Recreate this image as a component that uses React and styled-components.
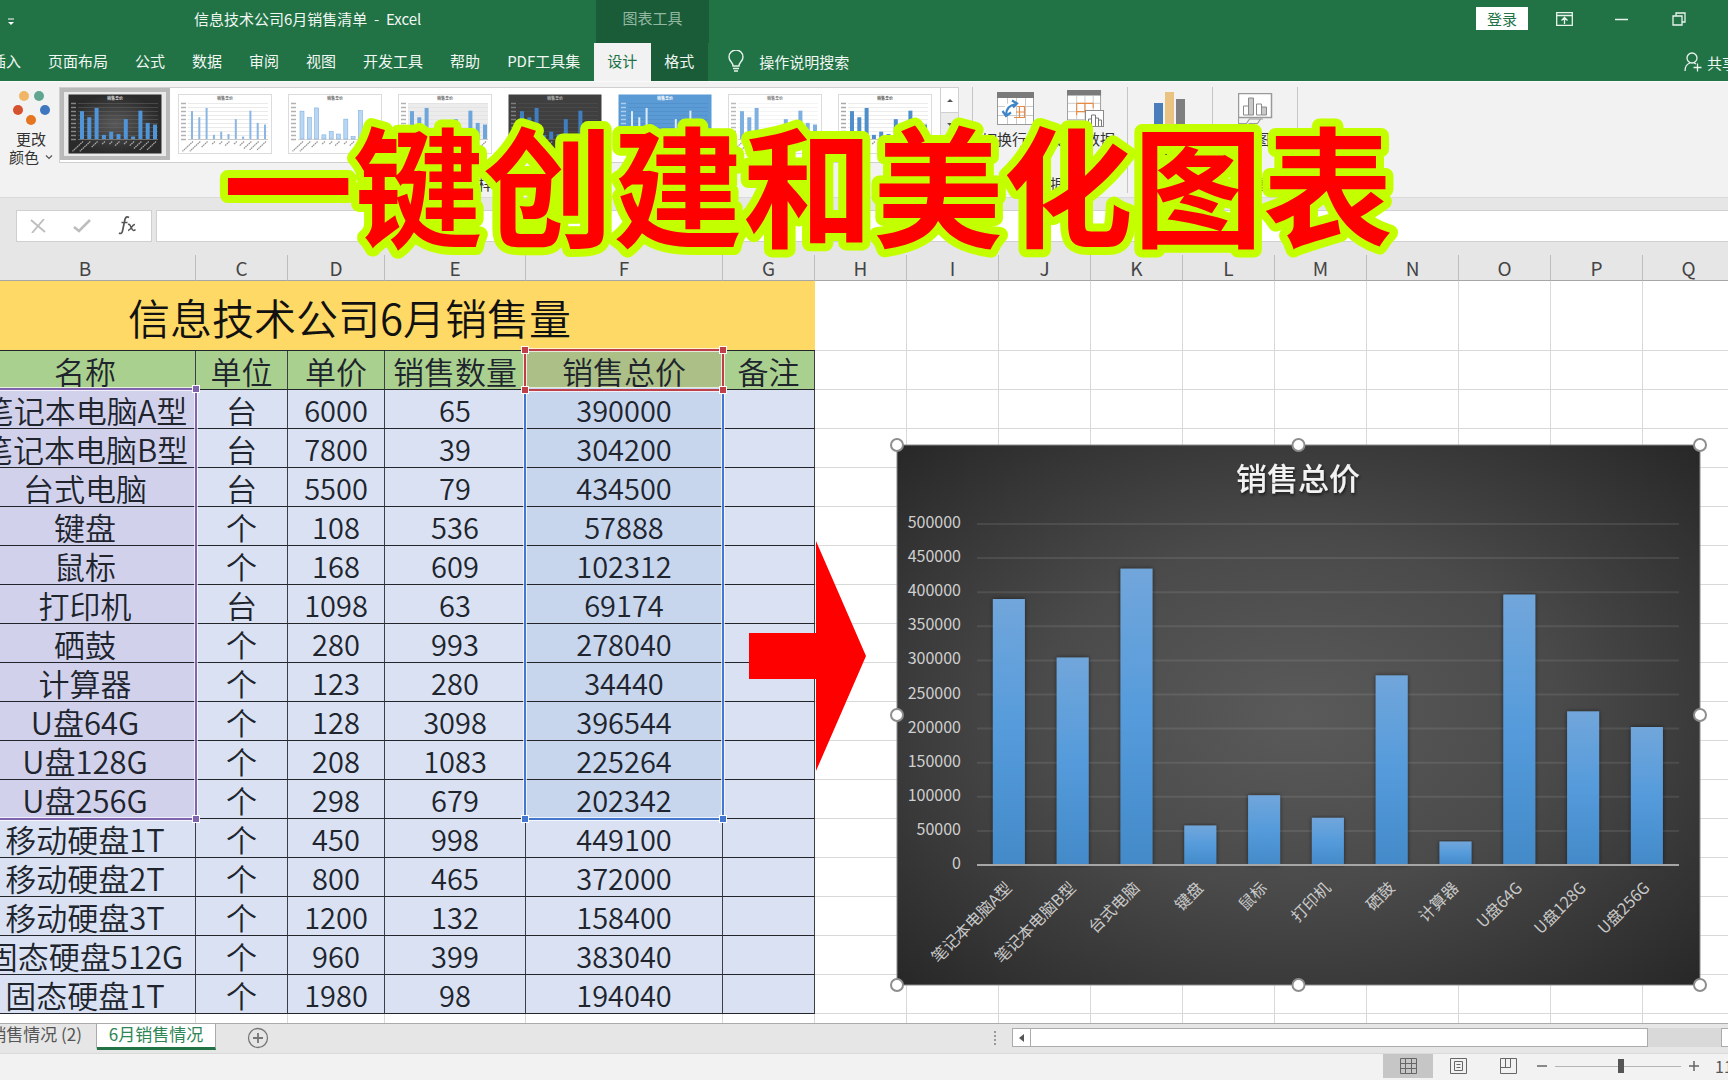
import React from "react";
import styled, { createGlobalStyle } from "styled-components";

const COLORS = {
  green: "#217346",
  greenDark: "#1a5c38",
  ribbon: "#f2f2f2",
  chrome: "#e6e6e6",
  line: "#c6c6c6",
};

const GlobalStyle = createGlobalStyle`
  * { box-sizing: border-box; }
  html, body { margin: 0; overflow: hidden; }
  body { font-family: "Noto Sans CJK SC", "Noto Sans", sans-serif; font-size: 15px; color: #333; }
  button, input { font: inherit; color: inherit; border: 0; padding: 0; margin: 0; background: none; }
`;

const Page = styled.div`
  position: relative;
  display: flex;
  flex-direction: column;
  height: 100vh;
  overflow: hidden;
  background: ${COLORS.chrome};
`;

/* ---------- title bar and tabs ---------- */

const Header = styled.header`
  position: relative;
  flex: none;
  background: ${COLORS.green};
  color: #f1f7f3;
`;

const TitleBar = styled.div`
  display: flex;
  align-items: center;
  height: 43px;
  padding-bottom: 6px;
`;

const QuickAccess = styled.button`
  display: flex;
  width: 22px;
  justify-content: center;
  padding-top: 6px;
  flex: none;
`;

const DocTitle = styled.div`
  width: 574px;
  padding-left: 172px;
  flex: none;
  line-height: 20px;
  white-space: pre;
`;

const ToolsCaption = styled.div`
  width: 113px;
  height: 43px;
  margin-bottom: -6px;
  padding-top: 8px;
  flex: none;
  background: ${COLORS.greenDark};
  color: #93b8a2;
  line-height: 20px;
  text-align: center;
`;

const WindowTools = styled.div`
  display: flex;
  align-items: center;
  gap: 34px;
  margin-left: auto;
  padding-right: 38px;
`;

const SignIn = styled.button`
  width: 52px;
  height: 23px;
  margin-right: -9px;
  background: #fff;
  color: ${COLORS.green};
  line-height: 22px;
`;

const WindowButton = styled.button`
  display: flex;
  width: 23px;
  justify-content: center;
`;

const TabBar = styled.nav`
  display: flex;
  height: 38px;
  margin-left: -22px;
`;

const Tab = styled.button`
  flex: none;
  padding: 0 14px 4px 13px;
  background: ${(p) => (p.$active ? COLORS.ribbon : p.$tool ? COLORS.greenDark : "transparent")};
  color: ${(p) => (p.$active ? COLORS.green : "inherit")};
  white-space: nowrap;
`;

const TellMe = styled.button`
  display: flex;
  align-items: center;
  gap: 15px;
  padding: 0 0 2px 20px;
`;

const Share = styled.button`
  display: flex;
  flex: none;
  align-items: center;
  gap: 5px;
  margin-left: auto;
  margin-right: -9px;
  white-space: nowrap;
`;

/* ---------- ribbon ---------- */

const Ribbon = styled.div`
  display: flex;
  flex: none;
  height: 116px;
  padding-top: 5px;
  background: ${COLORS.ribbon};
  border-top: 1px solid #fafafa;
`;

const Group = styled.section`
  display: flex;
  flex-direction: column;
  width: ${(p) => p.$width}px;
  height: 106px;
  flex: none;
  border-right: 1px solid ${COLORS.line};
`;

const GroupBody = styled.div`
  display: flex;
  flex: 1;
  gap: ${(p) => (p.$start ? 0 : 2)}px;
  justify-content: ${(p) => (p.$start ? "flex-start" : "center")};
`;

const GroupLabel = styled.div`
  height: 18px;
  line-height: 18px;
  text-align: center;
  padding-right: ${(p) => (p.$wide ? 16 : 0)}px;
`;

const RibbonButton = styled.button`
  display: flex;
  flex-direction: column;
  align-items: center;
  width: ${(p) => p.$width}px;
  padding-left: ${(p) => (p.$indent ? 3 : 0)}px;
  flex: none;
  line-height: 18px;
  white-space: nowrap;
`;

const IconBox = styled.span`
  display: flex;
  align-items: center;
  justify-content: center;
  height: 43px;
`;

const ButtonText = styled.span`
  display: flex;
  align-items: center;
  gap: 6px;
`;

const Gallery = styled.div`
  display: flex;
  align-items: flex-start;
  width: 900px;
  height: 76px;
  border: 1px solid #d0d0d0;
  background: #fff;
`;

const StyleItem = styled.button`
  width: 110px;
  height: 72px;
  flex: none;
  display: flex;
  align-items: center;
  justify-content: center;
  border: 4px solid ${(p) => (p.$active ? "#b9b9b9" : "transparent")};
  background: ${(p) => (p.$active ? "#e9e9e9" : "transparent")};
`;

const GalleryArrows = styled.div`
  margin-left: auto;
  width: 18px;
  height: 74px;
  display: flex;
  flex-direction: column;
  border-left: 1px solid #d0d0d0;
`;

const ArrowButton = styled.button`
  flex: 1;
  display: flex;
  align-items: center;
  justify-content: center;
  border-bottom: 1px solid #d0d0d0;
  background: ${(p) => (p.$muted ? "#ececec" : "#fff")};
`;

/* ---------- formula bar ---------- */

const FormulaBar = styled.div`
  display: flex;
  gap: 4px;
  flex: none;
  padding: 12px 0 13px 16px;
  border-top: 1px solid #dadada;
  background: ${COLORS.chrome};
`;

const FormulaTools = styled.div`
  display: flex;
  align-items: center;
  justify-content: space-around;
  width: 136px;
  height: 32px;
  border: 1px solid #d0d0d0;
  background: #fff;
`;

const FormulaInput = styled.input`
  flex: 1;
  min-width: 0;
  height: 32px;
  padding: 0 8px;
  border: 1px solid #d0d0d0;
  border-right: 0;
  background: #fff;
`;

/* ---------- sheet ---------- */

const Sheet = styled.main`
  position: relative;
  flex: 1;
  min-height: 0;
  overflow: hidden;
  background: #fff;
`;

const Grid = styled.table`
  width: 1850px;
  margin-left: -116px;
  table-layout: fixed;
  border-collapse: separate;
  border-spacing: 0;
`;

const ColumnHead = styled.th`
  height: 26px;
  padding: 0;
  border-right: 1px solid #bdbdbd;
  border-bottom: 1px solid #a6a6a6;
  background: ${COLORS.chrome};
  color: #444;
  font-size: 19px;
  font-weight: 400;
  line-height: 25px;
`;

const Cell = styled.td`
  height: 39px;
  padding: ${(p) => (p.$number ? 0 : 2)}px 0 0;
  border-right: 1px solid ${(p) => (p.$fill ? "#3c3f46" : "#d9d9d9")};
  border-bottom: 1px solid ${(p) => (p.$fill ? "#22252a" : "#d9d9d9")};
  background: ${(p) => p.$fill || "#fff"};
  color: #20242c;
  font-size: ${(p) => (p.$number ? 29 : 31)}px;
  font-weight: 350;
  line-height: ${(p) => (p.$number ? 38 : 36)}px;
  text-align: center;
  white-space: nowrap;
`;

const TitleCell = styled(Cell)`
  height: 70px;
  border-right: 0;
  color: #111;
  font-size: 42px;
  line-height: 67px;
`;

const EmptyTall = styled(Cell)`
  height: 70px;
`;

const RangeFrame = styled.div`
  position: absolute;
  left: ${(p) => p.$x}px;
  top: ${(p) => p.$y}px;
  width: ${(p) => p.$w}px;
  height: ${(p) => p.$h}px;
  border: 2px solid ${(p) => p.$color};
  box-shadow: 0 0 0 1px rgba(255, 255, 255, 0.7), inset 0 0 0 1px rgba(255, 255, 255, 0.7);
  pointer-events: none;
`;

const Knob = styled.i`
  position: absolute;
  width: 6px;
  height: 6px;
  background: ${(p) => p.$color};
  box-shadow: 0 0 0 1px #fff;
  ${(p) => (p.$top ? "top: -4px;" : "bottom: -4px;")}
  ${(p) => (p.$left ? "left: -4px;" : "right: -4px;")}
`;

const ChartFrame = styled.figure`
  position: absolute;
  left: 889px;
  top: 182px;
  margin: 0;
  line-height: 0;
`;

const ArrowShape = styled.svg`
  position: absolute;
  left: 749px;
  top: 286px;
`;

/* ---------- bottom bars ---------- */

const SheetBar = styled.div`
  display: flex;
  flex: none;
  height: 30px;
  border-top: 1px solid #ababab;
  background: ${COLORS.chrome};
  font-size: 17px;
`;

const SheetTab = styled.button`
  width: ${(p) => (p.$active ? 119 : 97)}px;
  height: 26px;
  flex: none;
  display: flex;
  justify-content: ${(p) => (p.$active ? "center" : "flex-end")};
  padding-right: ${(p) => (p.$active ? 0 : 14)}px;
  overflow: hidden;
  border-bottom: 3px solid ${(p) => (p.$active ? COLORS.green : "transparent")};
  border-right: 1px solid #ababab;
  background: ${(p) => (p.$active ? "#fff" : "transparent")};
  color: ${(p) => (p.$active ? "#2e8555" : "#555")};
  line-height: 20px;
  white-space: nowrap;
`;

const AddSheet = styled.button`
  display: flex;
  align-items: center;
  margin-left: 31px;
  height: 28px;
`;

const Scroller = styled.div`
  display: flex;
  align-items: center;
  width: 735px;
  margin-left: auto;
  padding-bottom: 2px;
`;

const Grip = styled.span`
  width: 19px;
  display: flex;
`;

const ScrollButton = styled.button`
  display: flex;
  align-items: center;
  justify-content: center;
  width: 19px;
  height: 19px;
  flex: none;
  margin-right: ${(p) => (p.$clipped ? -12 : 0)}px;
  border: 1px solid #ababab;
  background: #fff;
`;

const ScrollTrack = styled.div`
  flex: 1;
  height: 19px;
  background: #d9d9d9;
`;

const ScrollThumb = styled.div`
  width: 617px;
  height: 19px;
  border: 1px solid #ababab;
  border-left: 0;
  background: #fff;
`;

const StatusBar = styled.footer`
  display: flex;
  align-items: center;
  justify-content: flex-end;
  flex: none;
  height: 27px;
  padding-bottom: 2px;
  background: ${COLORS.ribbon};
  border-top: 1px solid #dadada;
  color: #555;
`;

const ViewButton = styled.button`
  display: flex;
  align-items: center;
  justify-content: center;
  width: 50px;
  height: 24px;
  background: ${(p) => (p.$active ? "#c6c6c6" : "transparent")};
`;

const ZoomStep = styled.button`
  width: 18px;
  height: 20px;
  display: flex;
  align-items: center;
  justify-content: center;
`;

const ZoomSlider = styled.input`
  appearance: none;
  width: 126px;
  height: 16px;
  margin: 0 4px;
  background: linear-gradient(#b5b5b5, #b5b5b5) center / 100% 1px no-repeat;
  &::-webkit-slider-thumb {
    appearance: none;
    width: 6px;
    height: 14px;
    background: #555;
  }
`;

const ZoomValue = styled.span`
  width: 13px;
  margin-left: 12px;
  overflow: hidden;
  font-size: 16px;
  line-height: 20px;
`;

const Banner = styled.svg`
  position: absolute;
  left: 200px;
  top: 100px;
  pointer-events: none;
`;

/* ---------- data ---------- */

const BODY = "#d9e1f2";
const HEAD = "#a9d08e";
const PURPLE = "#8064b0";
const BLUE = "#4478cf";
const RED = "#c0404a";

const COLUMNS = [91, 221, 92, 97, 141, 197, 92, 92, 92, 92, 92, 92, 92, 92, 92, 92, 92];
const LETTERS = ["", "B", "C", "D", "E", "F", "G", "H", "I", "J", "K", "L", "M", "N", "O", "P", "Q"];
const BLANKS = LETTERS.slice(7);

const ROWS = [
  ["笔记本电脑A型", "台", 6000, 65, 390000],
  ["笔记本电脑B型", "台", 7800, 39, 304200],
  ["台式电脑", "台", 5500, 79, 434500],
  ["键盘", "个", 108, 536, 57888],
  ["鼠标", "个", 168, 609, 102312],
  ["打印机", "台", 1098, 63, 69174],
  ["硒鼓", "个", 280, 993, 278040],
  ["计算器", "个", 123, 280, 34440],
  ["U盘64G", "个", 128, 3098, 396544],
  ["U盘128G", "个", 208, 1083, 225264],
  ["U盘256G", "个", 298, 679, 202342],
  ["移动硬盘1T", "个", 450, 998, 449100],
  ["移动硬盘2T", "个", 800, 465, 372000],
  ["移动硬盘3T", "个", 1200, 132, 158400],
  ["固态硬盘512G", "个", 960, 399, 383040],
  ["固态硬盘1T", "个", 1980, 98, 194040],
];

const CHARTED = 11;
const TABS = ["插入", "页面布局", "公式", "数据", "审阅", "视图", "开发工具", "帮助", "PDF工具集"];

const STYLES = [
  { bg: "url(#mini-dark)", bar: "#4f95d8", grid: "#666", text: "#ddd", w: 4, active: true },
  { bg: "#fff", bar: "#8ab6e2", grid: "#d5d5d5", text: "#666", w: 2 },
  { bg: "#fff", bar: "#b9d6f2", edge: "#7fb0e0", grid: "none", text: "#666", w: 4 },
  { bg: "#fff", plot: "#ececec", bar: "#6ea6dc", grid: "#ddd", text: "#666", w: 4 },
  { bg: "#3f3f3f", bar: "#3f7fbf", grid: "#555", text: "#bbb", w: 4 },
  { bg: "#5b9bd5", bar: "#dcebf9", grid: "#4a87c0", text: "#fff", w: 2 },
  { bg: "#fff", bar: "#7db0e0", grid: "#e8e8e8", text: "#777", w: 4 },
  { bg: "#fff", bar: "#4f8ecb", grid: "#d8d8d8", text: "#555", w: 4 },
];

function MiniChart({ s }) {
  const data = ROWS.slice(0, CHARTED);
  return (
    <svg width="94" height="60" viewBox="0 0 94 60" aria-hidden="true">
      <defs>
        <radialGradient id="mini-dark">
          <stop offset="0" stopColor="#595959" />
          <stop offset="1" stopColor="#2a2a2a" />
        </radialGradient>
      </defs>
      <rect x="0.5" y="0.5" width="93" height="59" fill={s.bg} stroke={s.bg === "#fff" ? "#dcdcdc" : "none"} />
      {s.plot && <rect x="10" y="9" width="80" height="36" fill={s.plot} />}
      <text x="47" y="6" fontSize="4" fontWeight="700" textAnchor="middle" fill={s.text}>销售总价</text>
      {Array.from({ length: 10 }, (_, i) => (
        <g key={i}>
          <path d={`M10 ${9.5 + i * 4}H90`} stroke={s.grid} strokeWidth="0.5" />
          <path d={`M3 ${9.5 + i * 4}h5`} stroke={s.text} strokeWidth="1.5" opacity="0.5" />
        </g>
      ))}
      {data.map((r, i) => (
        <g key={r[0]}>
          <rect
            x={14 + i * 7.3 - s.w / 2}
            y={45 - r[4] / 14000}
            width={s.w}
            height={r[4] / 14000}
            fill={s.bar}
            stroke={s.edge || "none"}
            strokeWidth="0.6"
          />
          <path
            d={`M${15 + i * 7.3} 47.5l${-1.5 * r[0].length} ${1.4 * r[0].length}`}
            stroke={s.text}
            strokeWidth="1.2"
            strokeDasharray="1.6 0.6"
            opacity="0.7"
          />
        </g>
      ))}
      <path d="M10 45.5H90" stroke={s.text} strokeWidth="0.5" opacity="0.5" />
    </svg>
  );
}

function SalesChart() {
  const left = 80;
  const bottom = 419;
  const unit = 341 / 500000;
  const step = 63.8;
  const handles = [[0, 0], [401.5, 0], [803, 0], [0, 270], [803, 270], [0, 540], [401.5, 540], [803, 540]];
  return (
    <ChartFrame>
      <svg width="819" height="556" viewBox="-8 -8 819 556" role="img" aria-label="销售总价">
        <defs>
          <radialGradient id="chart-bg" cx="0.5" cy="0.5" r="0.72">
            <stop offset="0" stopColor="#5a5a5a" />
            <stop offset="0.45" stopColor="#4a4a4a" />
            <stop offset="1" stopColor="#262626" />
          </radialGradient>
          <linearGradient id="bar-fill" x1="0" y1="0" x2="0" y2="1">
            <stop offset="0" stopColor="#71a6db" />
            <stop offset="0.5" stopColor="#559bdb" />
            <stop offset="1" stopColor="#438ac9" />
          </linearGradient>
          <filter id="bar-shadow" x="-20%" y="-5%" width="140%" height="110%">
            <feDropShadow dx="0" dy="0" stdDeviation="2" floodColor="#000" floodOpacity="0.55" />
          </filter>
          <filter id="title-shadow">
            <feDropShadow dx="1" dy="2" stdDeviation="1.5" floodColor="#000" floodOpacity="0.6" />
          </filter>
        </defs>
        <rect width="803" height="540" fill="url(#chart-bg)" stroke="#8a8a8a" />
        <text x="401" y="45" fontSize="31" fontWeight="500" fill="#f2f2f2" textAnchor="middle" filter="url(#title-shadow)">
          销售总价
        </text>
        {Array.from({ length: 11 }, (_, i) => {
          const y = bottom - i * 34.1;
          return (
            <g key={i}>
              <text x="64" y={y + 5} fontSize="16" fill="#cfcfcf" textAnchor="end">{i * 50000}</text>
              {i > 0 && <path d={`M${left} ${y + 1}h702`} stroke="#fff" strokeOpacity="0.09" strokeWidth="2" />}
            </g>
          );
        })}
        {ROWS.slice(0, CHARTED).map(([name, , , , total], i) => {
          const cx = left + step * (i + 0.5);
          const h = total * unit;
          return (
            <g key={name}>
              <rect x={cx - 16} y={bottom + 1 - h} width="32" height={h} fill="url(#bar-fill)" filter="url(#bar-shadow)" />
              <text
                transform={`translate(${cx + 4} ${bottom + 25}) rotate(-45)`}
                fontSize="16"
                fill="#c8c8c8"
                textAnchor="end"
              >
                {name}
              </text>
            </g>
          );
        })}
        <path d={`M${left} ${bottom + 1}h702`} stroke="#a6a6a6" strokeWidth="2" />
        {handles.map(([x, y]) => (
          <circle key={`${x}-${y}`} cx={x} cy={y} r="6" fill="#fff" stroke="#8e8e8e" strokeWidth="2" />
        ))}
      </svg>
    </ChartFrame>
  );
}

function fillFor(col, row) {
  if (row < CHARTED && col === 0) return "#d1d1ec";
  if (row < CHARTED && col === 4) return "#c7d5ed";
  return BODY;
}

function Blanks() {
  return BLANKS.map((l) => <Cell key={l} />);
}

function SalesGrid() {
  return (
    <Grid>
      <colgroup>
        {COLUMNS.map((w, i) => <col key={i} style={{ width: w }} />)}
        <col />
      </colgroup>
      <thead>
        <tr>
          {LETTERS.map((l, i) => <ColumnHead key={i}>{l}</ColumnHead>)}
          <ColumnHead />
        </tr>
      </thead>
      <tbody>
        <tr>
          <TitleCell colSpan={7} $fill="#ffd966">信息技术公司6月销售量</TitleCell>
          {BLANKS.map((l) => <EmptyTall key={l} />)}
        </tr>
        <tr>
          <Cell $fill={HEAD} />
          {["名称", "单位", "单价", "销售数量", "销售总价", "备注"].map((t) => (
            <Cell key={t} $fill={t === "销售总价" ? "#abbf86" : HEAD}>{t}</Cell>
          ))}
          <Blanks />
        </tr>
        {ROWS.map((row, r) => (
          <tr key={row[0]}>
            <Cell $fill={BODY} />
            {row.map((v, c) => (
              <Cell key={c} $fill={fillFor(c, r)} $number={c > 1}>{v}</Cell>
            ))}
            <Cell $fill={BODY} />
            <Blanks />
          </tr>
        ))}
        <tr>{LETTERS.map((l, i) => <Cell key={i} />)}</tr>
      </tbody>
    </Grid>
  );
}

function Chevron() {
  return (
    <svg width="8" height="6" viewBox="0 0 8 6" aria-hidden="true">
      <path d="M1 1.5l3 3 3-3" fill="none" stroke="#555" strokeWidth="1.2" />
    </svg>
  );
}

function PaletteIcon() {
  return (
    <svg width="38" height="38" viewBox="0 0 38 38" aria-hidden="true">
      <circle cx="12" cy="6" r="5" fill="#f0b565" />
      <circle cx="27" cy="6" r="5" fill="#5fa590" />
      <circle cx="6" cy="20" r="5" fill="#d6522f" />
      <circle cx="33" cy="20" r="5" fill="#3f76bd" />
      <circle cx="19" cy="30" r="5" fill="#e5751f" />
    </svg>
  );
}

function TableBase() {
  return (
    <>
      <rect x="0.5" y="0.5" width="36" height="32" fill="#fff" stroke="#999" />
      <rect width="37" height="6" fill="#7a7a7a" />
      <path d="M1 14.5h35M1 23.5h35M10.5 6v26M19.5 6v26M28.5 6v26" stroke="#c9c9c9" />
    </>
  );
}

function SwitchIcon() {
  return (
    <svg width="37" height="33" viewBox="0 0 37 33" aria-hidden="true">
      <TableBase />
      <path d="M17 25.5h10.5v-11h-7M19 20h8M22.5 14v11" fill="none" stroke="#ea8b45" strokeWidth="1.2" />
      <path d="M9 22c0-6 4-10 10-11" fill="none" stroke="#fff" strokeWidth="6" />
      <path d="M9 23c0-7 4-10 10-11M15 8.500l5 3-4 4M5.500 19l3.500 5 5-3.500" fill="none" stroke="#3d85c6" strokeWidth="2.2" />
    </svg>
  );
}

function SelectDataIcon() {
  return (
    <svg width="37" height="37" viewBox="0 0 37 37" aria-hidden="true">
      <g transform="scale(0.92)">
        <TableBase />
        <path d="M10.5 14.500h18M10.5 23.500h12M10.5 14.500v13M19.5 14.500v10M28.5 14.500v5" stroke="#ea8b45" strokeWidth="1.2" />
      </g>
      <rect x="18.5" y="20.5" width="18" height="16" fill="#fff" stroke="#8a8a8a" />
      <path d="M21.5 36v-7h3v7M24.5 36v-11h4v11M28.5 36v-8h3v8M31.5 36v-6h3v6" fill="none" stroke="#777" />
    </svg>
  );
}

function BarsIcon() {
  return (
    <svg width="32" height="34" viewBox="0 0 32 34" aria-hidden="true">
      <rect y="11" width="9" height="23" fill="#4a7ebb" />
      <rect x="11" width="9" height="34" fill="#eac282" />
      <rect x="22" y="7" width="9" height="27" fill="#7f7f7f" />
    </svg>
  );
}

function MoveIcon() {
  return (
    <svg width="35" height="32" viewBox="0 0 35 32" aria-hidden="true">
      <rect x="0.5" y="0.5" width="33" height="24" fill="#fff" stroke="#9a9a9a" strokeWidth="1.5" />
      <path d="M5.500 22v-9h5v9zM18.500 22v-11h5v11z" fill="#fff" stroke="#8a8a8a" />
      <path d="M10.500 22v-17h5v17zM23.500 22v-8h5v8z" fill="#c9c9c9" stroke="#8a8a8a" />
      <path d="M0.500 25v5.500h8l3-4.500h11l-3 4.500h-9M23 26h2" fill="none" stroke="#9a9a9a" strokeWidth="1.2" />
    </svg>
  );
}

export default function App() {
  return (
    <Page>
      <GlobalStyle />
      <Header>
        <TitleBar>
          <QuickAccess aria-label="自定义快速访问工具栏">
            <svg width="6" height="8" viewBox="0 0 6 8"><path d="M0 1h6" stroke="#fff" /><path d="M0 4h6l-3 3z" fill="#fff" /></svg>
          </QuickAccess>
          <DocTitle>信息技术公司6月销售清单  -  Excel</DocTitle>
          <ToolsCaption>图表工具</ToolsCaption>
          <WindowTools>
            <SignIn>登录</SignIn>
            <WindowButton aria-label="功能区显示选项">
              <svg width="17" height="14" viewBox="0 0 17 14" fill="none" stroke="#e9f3ed" strokeWidth="1.3">
                <path d="M0.700 0.700h15.600v12.600H0.700zM1 3.500h15M8.500 12V6M5.500 8.500l3-3 3 3" />
              </svg>
            </WindowButton>
            <WindowButton aria-label="最小化">
              <svg width="13" height="14" viewBox="0 0 13 14"><path d="M0 7.500h13" stroke="#e9f3ed" strokeWidth="1.5" /></svg>
            </WindowButton>
            <WindowButton aria-label="还原">
              <svg width="14" height="14" viewBox="0 0 14 14" fill="none" stroke="#e9f3ed" strokeWidth="1.3">
                <path d="M1 4h9v9H1zM4 4V1h9v9h-3" />
              </svg>
            </WindowButton>
          </WindowTools>
        </TitleBar>
        <TabBar>
          {TABS.map((t) => <Tab key={t}>{t}</Tab>)}
          <Tab $active>设计</Tab>
          <Tab $tool>格式</Tab>
          <TellMe>
            <svg width="16" height="22" viewBox="0 0 16 22" fill="none" stroke="#e9f3ed" strokeWidth="1.4">
              <path d="M5 16c0-4-4-4.500-4-9a7 7 0 0 1 14 0c0 4.500-4 5-4 9zM5 18.500h6M6 21h4" />
            </svg>
            操作说明搜索
          </TellMe>
          <Share>
            <svg width="18" height="20" viewBox="0 0 18 20" fill="none" stroke="#e9f3ed" strokeWidth="1.3">
              <circle cx="8" cy="6" r="5" />
              <path d="M1 19c0-4 2-7 5-8M10 11l2 1M13.500 11.500v8M9.500 15.500h8" />
            </svg>
            共享
          </Share>
        </TabBar>
      </Header>

      <Ribbon>
        <Group $width={973}>
          <GroupBody $start>
            <RibbonButton $width={59} $indent>
              <IconBox><PaletteIcon /></IconBox>
              <ButtonText>更改</ButtonText>
              <ButtonText>颜色 <Chevron /></ButtonText>
            </RibbonButton>
            <Gallery>
              {STYLES.map((s, i) => (
                <StyleItem key={i} $active={s.active} aria-label={`样式 ${i + 1}`}><MiniChart s={s} /></StyleItem>
              ))}
              <GalleryArrows>
                <ArrowButton aria-label="上一行">
                  <svg width="6" height="4" viewBox="0 0 6 4"><path d="M0 4l3-3 3 3z" fill="#555" /></svg>
                </ArrowButton>
                <ArrowButton $muted aria-label="下一行">
                  <svg width="6" height="4" viewBox="0 0 6 4"><path d="M0 0l3 3 3-3z" fill="#555" /></svg>
                </ArrowButton>
                <ArrowButton aria-label="其他">
                  <svg width="6" height="4" viewBox="0 0 6 4"><path d="M0 0l3 3 3-3z" fill="#555" /></svg>
                </ArrowButton>
              </GalleryArrows>
            </Gallery>
          </GroupBody>
          <GroupLabel $wide>图表样式</GroupLabel>
        </Group>
        <Group $width={155}>
          <GroupBody>
            <RibbonButton $width={68}><IconBox><SwitchIcon /></IconBox><ButtonText>切换行/列</ButtonText></RibbonButton>
            <RibbonButton $width={68}><IconBox><SelectDataIcon /></IconBox><ButtonText>选择数据</ButtonText></RibbonButton>
          </GroupBody>
          <GroupLabel>数据</GroupLabel>
        </Group>
        <Group $width={85}>
          <GroupBody>
            <RibbonButton $width={68}>
              <IconBox><BarsIcon /></IconBox>
              <ButtonText>更改</ButtonText>
              <ButtonText>图表类型</ButtonText>
            </RibbonButton>
          </GroupBody>
          <GroupLabel>类型</GroupLabel>
        </Group>
        <Group $width={85}>
          <GroupBody>
            <RibbonButton $width={68}><IconBox><MoveIcon /></IconBox><ButtonText>移动图表</ButtonText></RibbonButton>
          </GroupBody>
          <GroupLabel>位置</GroupLabel>
        </Group>
      </Ribbon>

      <FormulaBar>
        <FormulaTools>
          <button aria-label="取消">
            <svg width="16" height="14" viewBox="0 0 16 14"><path d="M1 1l14 12M14 0L2 14" stroke="#bdbdbd" strokeWidth="1.8" /></svg>
          </button>
          <button aria-label="输入">
            <svg width="18" height="14" viewBox="0 0 18 14"><path d="M1 8l5 4L17 1" fill="none" stroke="#bdbdbd" strokeWidth="2.6" /></svg>
          </button>
          <button aria-label="插入函数">
            <svg width="20" height="22" viewBox="0 0 20 22" fill="none" stroke="#555">
              <path d="M11 4.500c-3-2-4 1-4.500 4L4.500 18c-.5 2.500-2 3-3.500 2M3.500 9.500h6" strokeWidth="1.7" />
              <path d="M10 11.500c3-1.500 3 6 5.500 6 1 0 1.500-.5 2-1M17 11.500c-3-.5-4 6-7 6" strokeWidth="1.5" />
            </svg>
          </button>
        </FormulaTools>
        <FormulaInput aria-label="编辑栏" />
      </FormulaBar>

      <Sheet>
        <SalesGrid />
        <RangeFrame $x={-24} $y={133} $w={221} $h={432} $color={PURPLE}>
          <Knob $top $color={PURPLE} />
          <Knob $color={PURPLE} />
        </RangeFrame>
        <RangeFrame $x={524} $y={133} $w={200} $h={432} $color={BLUE}>
          <Knob $left $color={BLUE} />
          <Knob $color={BLUE} />
        </RangeFrame>
        <RangeFrame $x={524} $y={94} $w={200} $h={42} $color={RED}>
          <Knob $top $left $color={RED} />
          <Knob $top $color={RED} />
          <Knob $left $color={RED} />
          <Knob $color={RED} />
        </RangeFrame>
        <SalesChart />
        <ArrowShape width="117" height="230" viewBox="0 0 117 230" aria-hidden="true">
          <path d="M0 92h67V0l50 115-50 115v-92H0z" fill="#f00" />
        </ArrowShape>
      </Sheet>

      <SheetBar>
        <SheetTab>销售情况 (2)</SheetTab>
        <SheetTab $active>6月销售情况</SheetTab>
        <AddSheet aria-label="新工作表">
          <svg width="22" height="22" viewBox="0 0 22 22" fill="none" stroke="#777">
            <circle cx="11" cy="11" r="9.5" strokeWidth="1.3" />
            <path d="M11 6v10M6 11h10" strokeWidth="1.8" />
          </svg>
        </AddSheet>
        <Scroller>
          <Grip>
            <svg width="4" height="14" viewBox="0 0 4 14" fill="#999">
              <rect width="2" height="2" x="1" /><rect width="2" height="2" x="1" y="4" /><rect width="2" height="2" x="1" y="8" /><rect width="2" height="2" x="1" y="12" />
            </svg>
          </Grip>
          <ScrollButton aria-label="向左滚动">
            <svg width="6" height="8" viewBox="0 0 6 8"><path d="M5 0v8L0 4z" fill="#555" /></svg>
          </ScrollButton>
          <ScrollTrack><ScrollThumb /></ScrollTrack>
          <ScrollButton $clipped aria-label="向右滚动" />
        </Scroller>
      </SheetBar>

      <StatusBar>
        <ViewButton $active aria-label="普通">
          <svg width="17" height="16" viewBox="0 0 17 16" fill="none" stroke="#666"><path d="M0.500 0.500h16v15H0.500zM0.500 5.500h16M0.500 10.500h16M5.500 0v16M11.500 0v16" /></svg>
        </ViewButton>
        <ViewButton aria-label="页面布局">
          <svg width="17" height="16" viewBox="0 0 17 16" fill="none" stroke="#666"><path d="M0.500 0.500h16v15H0.500zM4.500 3.500h8v9h-8zM6.500 6.500h4M6.500 9.500h4" /></svg>
        </ViewButton>
        <ViewButton aria-label="分页预览">
          <svg width="17" height="16" viewBox="0 0 17 16" fill="none" stroke="#666"><path d="M0.500 0.500h16v15H0.500zM5.500 0v9.500M0.500 9.500h10V0" /></svg>
        </ViewButton>
        <ZoomStep aria-label="缩小">
          <svg width="10" height="10" viewBox="0 0 10 10"><path d="M0 5h10" stroke="#666" strokeWidth="1.5" /></svg>
        </ZoomStep>
        <ZoomSlider type="range" min="10" max="210" defaultValue="115" aria-label="缩放" />
        <ZoomStep aria-label="放大">
          <svg width="10" height="10" viewBox="0 0 10 10"><path d="M0 5h10M5 0v10" stroke="#666" strokeWidth="1.5" /></svg>
        </ZoomStep>
        <ZoomValue>110%</ZoomValue>
      </StatusBar>

      <Banner width="1220" height="180" viewBox="0 0 1220 180">
        <text
          x="608"
          y="137"
          textAnchor="middle"
          fontSize="130"
          fontWeight="700"
          fill="#f00"
          stroke="#c4ff00"
          strokeWidth="16"
          strokeLinejoin="round"
          paintOrder="stroke"
        >
          一键创建和美化图表
        </text>
      </Banner>
    </Page>
  );
}
